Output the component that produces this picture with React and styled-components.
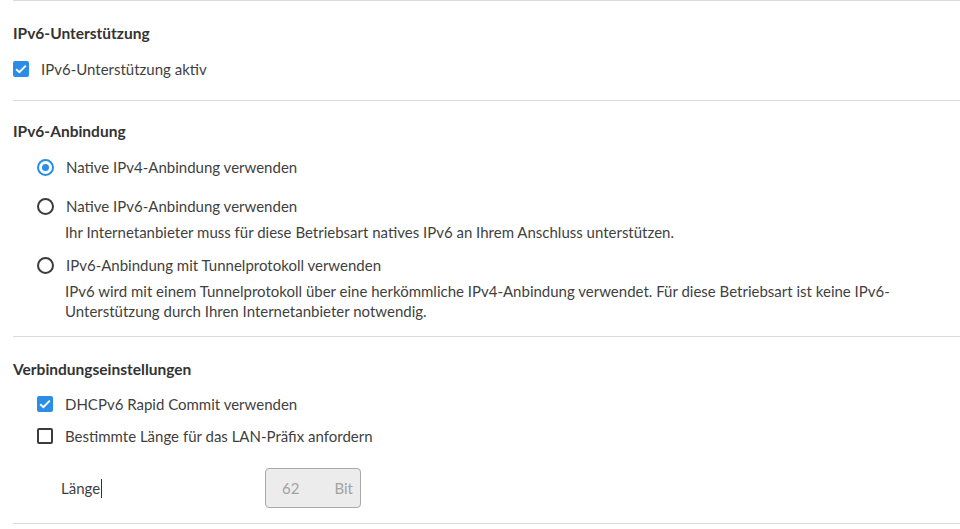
import React from "react";
import styled, { createGlobalStyle } from "styled-components";

const GlobalStyle = createGlobalStyle`
  html, body {
    margin: 0;
    padding: 0;
    background: #fff;
  }
  body {
    font-family: "Lato", "Open Sans", sans-serif;
    color: #3f3f3f;
  }
`;

const blue = "#2b8ee6";

const Page = styled.div`
  padding: 0 0 0 13px;
  width: 947px;
`;

const Section = styled.section`
  border-top: 1px solid #d9d9d9;
  padding: ${({ pad }) => pad};
  &:last-child {
    border-bottom: 1px solid #d9d9d9;
  }
`;

const Heading = styled.h3`
  margin: 0;
  font-size: 15.5px;
  line-height: 22px;
  font-weight: 700;
  color: #333;
`;

const Row = styled.label`
  display: flex;
  align-items: center;
  gap: 12px;
  height: 20px;
  margin-top: ${({ mt }) => mt}px;
  padding-left: ${({ indent }) => indent}px;
  font-size: 15px;
  cursor: pointer;
`;

const Box = styled.span`
  box-sizing: border-box;
  width: 16px;
  height: 16px;
  flex: none;
  border-radius: 2px;
  display: flex;
  align-items: center;
  justify-content: center;
  background: ${({ checked }) => (checked ? blue : "#fff")};
  border: ${({ checked }) => (checked ? "none" : "2px solid #3c3c3c")};
`;

const Radio = styled.span`
  box-sizing: border-box;
  width: 17px;
  height: 17px;
  flex: none;
  border-radius: 50%;
  border: 2px solid ${({ checked }) => (checked ? blue : "#3c3c3c")};
  display: flex;
  align-items: center;
  justify-content: center;
  &::after {
    content: "";
    display: ${({ checked }) => (checked ? "block" : "none")};
    width: 7px;
    height: 7px;
    border-radius: 50%;
    background: ${blue};
  }
`;

const Desc = styled.p`
  margin: ${({ mt }) => mt}px 0 0 52px;
  font-size: 15px;
  line-height: 20px;
  max-width: 860px;
`;

const FieldRow = styled.div`
  display: flex;
  align-items: center;
  margin-top: ${({ mt }) => mt}px;
  padding-left: 48px;
  font-size: 15px;
`;

const FieldLabel = styled.span`
  width: 204px;
  display: flex;
  align-items: center;
`;

const Caret = styled.span`
  display: inline-block;
  width: 1px;
  height: 19px;
  background: #333;
  margin-left: 1px;
`;

const Input = styled.div`
  box-sizing: border-box;
  width: 96px;
  height: 40px;
  border: 1px solid #a9a9a9;
  border-radius: 4px;
  background: #ececec;
  color: #a3a3a3;
  display: flex;
  align-items: center;
  justify-content: space-between;
  padding: 0 7px 0 16px;
  font-size: 15px;
`;

const Check = () => (
  <svg width="12" height="10" viewBox="0 0 12 10">
    <path d="M1.2 5.2 L4.4 8.2 L10.8 1.6" fill="none" stroke="#fff" strokeWidth="2" />
  </svg>
);

const CheckRow = ({ checked, indent = 0, mt, children }) => (
  <Row indent={indent} mt={mt}>
    <Box checked={checked}>{checked && <Check />}</Box>
    {children}
  </Row>
);

const RadioRow = ({ checked, mt, children }) => (
  <Row indent={24} mt={mt}>
    <Radio checked={checked} />
    {children}
  </Row>
);

export default function App() {
  return (
    <>
      <GlobalStyle />
      <Page>
        <Section pad="21px 0 21px">
          <Heading>IPv6-Unterstützung</Heading>
          <CheckRow checked mt={15}>IPv6-Unterstützung aktiv</CheckRow>
        </Section>
        <Section pad="19px 0 15px">
          <Heading>IPv6-Anbindung</Heading>
          <RadioRow checked mt={15}>Native IPv4-Anbindung verwenden</RadioRow>
          <RadioRow mt={19}>Native IPv6-Anbindung verwenden</RadioRow>
          <Desc mt={6}>
            Ihr Internetanbieter muss für diese Betriebsart natives IPv6 an Ihrem Anschluss unterstützen.
          </Desc>
          <RadioRow mt={13}>IPv6-Anbindung mit Tunnelprotokoll verwenden</RadioRow>
          <Desc mt={6}>
            IPv6 wird mit einem Tunnelprotokoll über eine herkömmliche IPv4-Anbindung verwendet. Für diese
            Betriebsart ist keine IPv6-Unterstützung durch Ihren Internetanbieter notwendig.
          </Desc>
        </Section>
        <Section pad="21px 0 15px">
          <Heading>Verbindungseinstellungen</Heading>
          <CheckRow checked indent={24} mt={14}>DHCPv6 Rapid Commit verwenden</CheckRow>
          <CheckRow indent={24} mt={12}>Bestimmte Länge für das LAN-Präfix anfordern</CheckRow>
          <FieldRow mt={22}>
            <FieldLabel>
              Länge
              <Caret />
            </FieldLabel>
            <Input>
              <span>62</span>
              <span>Bit</span>
            </Input>
          </FieldRow>
        </Section>
      </Page>
    </>
  );
}
